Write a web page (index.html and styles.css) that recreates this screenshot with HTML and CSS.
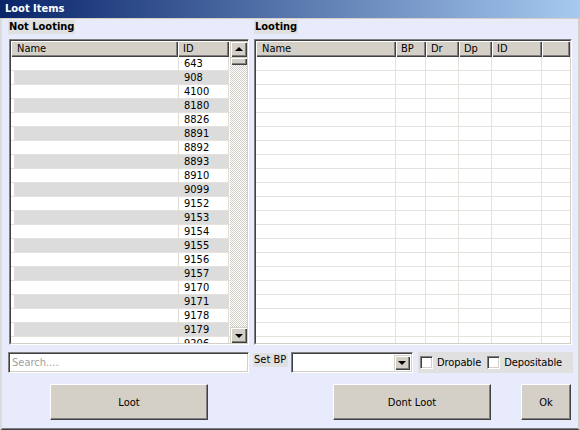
FILE: index.html
```html
<!DOCTYPE html>
<html>
<head>
<meta charset="utf-8">
<title>Loot Items</title>
<link rel="stylesheet" href="styles.css">
</head>
<body>
<div class="win">
  <div class="titlebar">Loot Items</div>
  <div class="client">
    <div class="main">
      <div class="panel">
        <div class="caption">Not Looting</div>
        <div class="listbox left-list">
          <div class="table">
            <div class="hdr hdr-left">
              <div class="hcell">Name</div>
              <div class="hcell">ID</div>
            </div>
            <div class="rows">
              <div class="row"><div class="c-name"></div><div class="c-id">643</div></div>
              <div class="row alt"><div class="c-name"></div><div class="c-id">908</div></div>
              <div class="row"><div class="c-name"></div><div class="c-id">4100</div></div>
              <div class="row alt"><div class="c-name"></div><div class="c-id">8180</div></div>
              <div class="row"><div class="c-name"></div><div class="c-id">8826</div></div>
              <div class="row alt"><div class="c-name"></div><div class="c-id">8891</div></div>
              <div class="row"><div class="c-name"></div><div class="c-id">8892</div></div>
              <div class="row alt"><div class="c-name"></div><div class="c-id">8893</div></div>
              <div class="row"><div class="c-name"></div><div class="c-id">8910</div></div>
              <div class="row alt"><div class="c-name"></div><div class="c-id">9099</div></div>
              <div class="row"><div class="c-name"></div><div class="c-id">9152</div></div>
              <div class="row alt"><div class="c-name"></div><div class="c-id">9153</div></div>
              <div class="row"><div class="c-name"></div><div class="c-id">9154</div></div>
              <div class="row alt"><div class="c-name"></div><div class="c-id">9155</div></div>
              <div class="row"><div class="c-name"></div><div class="c-id">9156</div></div>
              <div class="row alt"><div class="c-name"></div><div class="c-id">9157</div></div>
              <div class="row"><div class="c-name"></div><div class="c-id">9170</div></div>
              <div class="row alt"><div class="c-name"></div><div class="c-id">9171</div></div>
              <div class="row"><div class="c-name"></div><div class="c-id">9178</div></div>
              <div class="row alt"><div class="c-name"></div><div class="c-id">9179</div></div>
              <div class="row"><div class="c-name"></div><div class="c-id">9206</div></div>
            </div>
          </div>
          <div class="vscroll">
            <div class="sbtn"><span class="tri-up"></span></div>
            <div class="thumb"></div>
            <div class="track"></div>
            <div class="sbtn"><span class="tri-down"></span></div>
          </div>
        </div>
      </div>
      <div class="panel">
        <div class="caption">Looting</div>
        <div class="listbox right-list">
          <div class="table">
            <div class="hdr hdr-right">
              <div class="hcell">Name</div>
              <div class="hcell">BP</div>
              <div class="hcell">Dr</div>
              <div class="hcell">Dp</div>
              <div class="hcell">ID</div>
              <div class="hcell"></div>
            </div>
            <div class="rows grid-rows">
              <div class="grow"><i></i><i></i><i></i><i></i><i></i><i></i></div>
              <div class="grow"><i></i><i></i><i></i><i></i><i></i><i></i></div>
              <div class="grow"><i></i><i></i><i></i><i></i><i></i><i></i></div>
              <div class="grow"><i></i><i></i><i></i><i></i><i></i><i></i></div>
              <div class="grow"><i></i><i></i><i></i><i></i><i></i><i></i></div>
              <div class="grow"><i></i><i></i><i></i><i></i><i></i><i></i></div>
              <div class="grow"><i></i><i></i><i></i><i></i><i></i><i></i></div>
              <div class="grow"><i></i><i></i><i></i><i></i><i></i><i></i></div>
              <div class="grow"><i></i><i></i><i></i><i></i><i></i><i></i></div>
              <div class="grow"><i></i><i></i><i></i><i></i><i></i><i></i></div>
              <div class="grow"><i></i><i></i><i></i><i></i><i></i><i></i></div>
              <div class="grow"><i></i><i></i><i></i><i></i><i></i><i></i></div>
              <div class="grow"><i></i><i></i><i></i><i></i><i></i><i></i></div>
              <div class="grow"><i></i><i></i><i></i><i></i><i></i><i></i></div>
              <div class="grow"><i></i><i></i><i></i><i></i><i></i><i></i></div>
              <div class="grow"><i></i><i></i><i></i><i></i><i></i><i></i></div>
              <div class="grow"><i></i><i></i><i></i><i></i><i></i><i></i></div>
              <div class="grow"><i></i><i></i><i></i><i></i><i></i><i></i></div>
              <div class="grow"><i></i><i></i><i></i><i></i><i></i><i></i></div>
              <div class="grow"><i></i><i></i><i></i><i></i><i></i><i></i></div>
              <div class="grow"><i></i><i></i><i></i><i></i><i></i><i></i></div>
            </div>
          </div>
        </div>
      </div>
    </div>

    <div class="controls">
      <div class="search">Search....</div>
      <div class="tag">Set BP</div>
      <div class="combo"><div class="field"></div><div class="dbtn"><span class="tri-down"></span></div></div>
      <div class="checks">
        <span class="chk"></span><span class="chk-label">Dropable</span>
        <span class="chk"></span><span class="chk-label">Depositable</span>
      </div>
    </div>

    <div class="buttons">
      <div class="btn btn-loot">Loot</div>
      <div class="btn btn-dont">Dont Loot</div>
      <div class="btn btn-ok">Ok</div>
    </div>
  </div>
</div>
</body>
</html>
```

FILE: styles.css
```css
html, body {
  margin: 0;
  padding: 0;
  background: #e7ebfb;
}

body {
  font-family: "DejaVu Sans Condensed", "Liberation Sans", Arial, sans-serif;
  font-size: 11px;
  color: #000;
}

.win {
  width: 580px;
  height: 430px;
  display: flex;
  flex-direction: column;
  background: #e7ebfb;
  overflow: hidden;
}

.titlebar {
  height: 18px;
  line-height: 18px;
  padding-left: 5px;
  color: #fff;
  font-weight: bold;
  font-size: 11px;
  background: linear-gradient(to right, #0a246a, #a6caf0);
  border-bottom: 1px solid #d4d0c8;
}

.client {
  flex: 1;
  display: flex;
  flex-direction: column;
  border-left: 2px solid #dcdcdc;
  border-right: 2px solid #d4d0c8;
  border-bottom: 1px solid #404040;
  box-shadow: inset 0 -1px #808080;
  padding: 1px 0 0 6px;
}

.main {
  display: grid;
  grid-template-columns: 241px 318px;
  column-gap: 5px;
}

.panel {
  display: flex;
  flex-direction: column;
  align-items: flex-start;
}

.caption {
  font-weight: bold;
  font-size: 11px;
  height: 14px;
  line-height: 14px;
  background: #e0e0e0;
  padding: 0 1px;
}

.listbox {
  margin-top: 5px;
  height: 306px;
  box-sizing: border-box;
  border: 1px solid;
  border-color: #808080 #fff #fff #808080;
  background: #fff;
  display: flex;
  overflow: hidden;
}

.left-list {
  margin-left: 1px;
  width: 240px;
}

.right-list {
  width: 318px;
}

.table {
  flex: 1;
  display: flex;
  flex-direction: column;
  border: 1px solid;
  border-color: #404040 #d4d0c8 #d4d0c8 #404040;
  border-right: 0;
  overflow: hidden;
}

.right-list .table {
  border-right: 1px solid #d4d0c8;
}

.hdr {
  display: grid;
  height: 16px;
  flex: none;
}

.hdr-left {
  grid-template-columns: 167px 51px;
}

.hdr-right {
  grid-template-columns: 140px 30px 33px 33px 50px 28px;
}

.hcell {
  background: #d4d0c8;
  box-shadow: inset 1px 1px #fff, inset -1px -1px #404040, inset -2px -2px #808080;
  line-height: 16px;
  padding-left: 6px;
  white-space: nowrap;
  overflow: hidden;
}

.hdr-left .hcell:nth-child(2),
.hdr-right .hcell:nth-child(n+2) {
  padding-left: 5px;
}

.rows {
  flex: 1;
  overflow: hidden;
}

.row {
  display: grid;
  grid-template-columns: 167px 51px;
  height: 14px;
  box-sizing: border-box;
  border-bottom: 1px solid #e4e2dc;
}

.c-name {
  height: 13px;
}

.c-id {
  height: 13px;
  line-height: 13px;
  padding-left: 5px;
  border-left: 1px solid #dedbd4;
  border-right: 1px solid #dedbd4;
}

.row.alt .c-name {
  background: #dcdcdc;
  border-left: 3px solid #fff;
}

.row.alt .c-id {
  background: #dcdcdc;
}

.grow {
  display: grid;
  grid-template-columns: 140px 30px 33px 33px 50px 28px;
  height: 14px;
  box-sizing: border-box;
  border-bottom: 1px solid #e4e2dc;
}

.grow i {
  border-right: 1px solid #e4e2dc;
}

.grow i:last-child {
  border-right: 0;
}

.vscroll {
  width: 18px;
  flex: none;
  display: flex;
  flex-direction: column;
  border-top: 1px solid #404040;
  border-bottom: 1px solid #d4d0c8;
  padding-right: 1px;
  box-sizing: border-box;
  background: #d4d0c8;
}

.sbtn,
.thumb,
.dbtn {
  background: #d4d0c8;
  box-shadow: inset 1px 1px #d4d0c8, inset 2px 2px #fff, inset -1px -1px #404040, inset -2px -2px #808080;
}

.sbtn {
  height: 16px;
  flex: none;
  display: flex;
  align-items: center;
  justify-content: center;
}

.thumb {
  height: 8px;
  flex: none;
}

.track {
  flex: 1;
  background: repeating-conic-gradient(#d4d0c8 0 25%, #fff 0 50%) 0 0 / 2px 2px;
}

.tri-up {
  width: 0;
  height: 0;
  border-left: 4px solid transparent;
  border-right: 4px solid transparent;
  border-bottom: 4px solid #000;
  margin-top: -1px;
}

.tri-down {
  width: 0;
  height: 0;
  border-left: 4px solid transparent;
  border-right: 4px solid transparent;
  border-top: 4px solid #000;
  margin-top: 1px;
}

.controls {
  margin-top: 7px;
  height: 21px;
  display: flex;
  align-items: flex-start;
}

.search {
  width: 241px;
  height: 21px;
  box-sizing: border-box;
  border: 1px solid;
  border-color: #808080 #fff #fff #808080;
  box-shadow: inset 1px 1px #404040, inset -1px -1px #d4d0c8;
  background: #fff;
  color: #a0a0a0;
  line-height: 19px;
  padding-left: 3px;
}

.tag {
  margin-left: 4px;
  margin-top: 1px;
  width: 35px;
  box-sizing: border-box;
  height: 14px;
  line-height: 14px;
  background: #e0e0e0;
  padding: 0 1px;
  white-space: nowrap;
}

.combo {
  margin-left: 3px;
  width: 122px;
  height: 21px;
  box-sizing: border-box;
  border: 1px solid;
  border-color: #808080 #fff #fff #808080;
  box-shadow: inset 1px 1px #404040, inset -1px -1px #d4d0c8;
  background: #fff;
  display: flex;
  padding: 2px 2px 2px 2px;
}

.combo .field {
  flex: 1;
}

.dbtn {
  width: 16px;
  height: 15px;
  display: flex;
  align-items: center;
  justify-content: center;
}

.checks {
  margin-left: 5px;
  width: 155px;
  height: 21px;
  background: #e0e0e0;
  display: flex;
  align-items: center;
  padding-left: 2px;
  box-sizing: border-box;
}

.chk {
  width: 13px;
  height: 13px;
  box-sizing: border-box;
  border: 1px solid;
  border-color: #808080 #fff #fff #808080;
  box-shadow: inset 1px 1px #404040, inset -1px -1px #d4d0c8;
  background: #fff;
  flex: none;
}

.chk-label {
  margin-left: 4px;
  margin-right: 6px;
  white-space: nowrap;
  letter-spacing: -0.1px;
}

.buttons {
  margin-top: 11px;
  display: flex;
  height: 36px;
}

.btn {
  height: 36px;
  box-sizing: border-box;
  background: #d4d0c8;
  border: 1px solid;
  border-color: #fff #404040 #404040 #fff;
  box-shadow: inset -1px -1px #808080;
  display: flex;
  align-items: center;
  justify-content: center;
}

.btn-loot {
  width: 158px;
  margin-left: 42px;
}

.btn-dont {
  width: 158px;
  margin-left: 125px;
}

.btn-ok {
  width: 50px;
  margin-left: 30px;
}
```
